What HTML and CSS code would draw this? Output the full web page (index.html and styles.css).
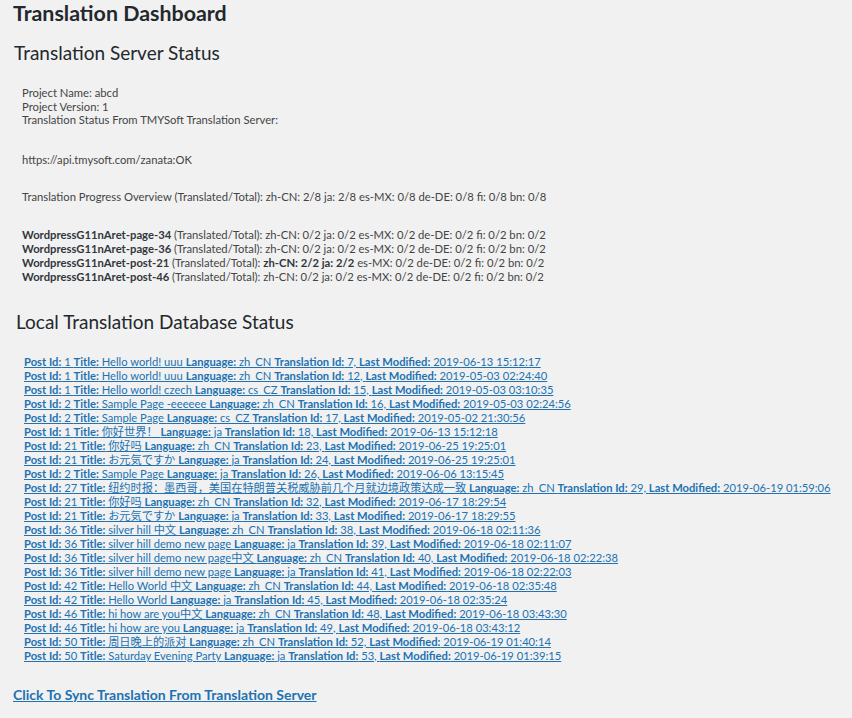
FILE: index.html
```html
<!DOCTYPE html>
<html lang="en">
<head>
<meta charset="utf-8">
<title>Translation Dashboard</title>
<link rel="stylesheet" href="styles.css">
</head>
<body>
<div class="wrap">
  <h1 class="page-title">Translation Dashboard</h1>
  <h2 class="section-title">Translation Server Status</h2>

  <div class="info block-project">
    <div>Project Name: abcd</div>
    <div>Project Version: 1</div>
    <div>Translation Status From TMYSoft Translation Server:</div>
  </div>

  <div class="info gap-server">https://api.tmysoft.com/zanata:OK</div>

  <div class="info gap-progress">Translation Progress Overview (Translated/Total): zh-CN: 2/8 ja: 2/8 es-MX: 0/8 de-DE: 0/8 fi: 0/8 bn: 0/8</div>

  <div class="info gap-docs">
    <div><b>WordpressG11nAret-page-34</b> (Translated/Total): zh-CN: 0/2 ja: 0/2 es-MX: 0/2 de-DE: 0/2 fi: 0/2 bn: 0/2</div>
    <div><b>WordpressG11nAret-page-36</b> (Translated/Total): zh-CN: 0/2 ja: 0/2 es-MX: 0/2 de-DE: 0/2 fi: 0/2 bn: 0/2</div>
    <div><b>WordpressG11nAret-post-21</b> (Translated/Total): <b>zh-CN: 2/2 ja: 2/2</b> es-MX: 0/2 de-DE: 0/2 fi: 0/2 bn: 0/2</div>
    <div><b>WordpressG11nAret-post-46</b> (Translated/Total): zh-CN: 0/2 ja: 0/2 es-MX: 0/2 de-DE: 0/2 fi: 0/2 bn: 0/2</div>
  </div>

  <h2 class="section-title local">Local Translation Database Status</h2>

  <ul class="posts">
    <li><a href="#"><b>Post Id:</b> 1 <b>Title:</b> Hello world! uuu <b>Language:</b> zh_CN <b>Translation Id:</b> 7, <b>Last Modified:</b> 2019-06-13 15:12:17</a></li>
    <li><a href="#"><b>Post Id:</b> 1 <b>Title:</b> Hello world! uuu <b>Language:</b> zh_CN <b>Translation Id:</b> 12, <b>Last Modified:</b> 2019-05-03 02:24:40</a></li>
    <li><a href="#"><b>Post Id:</b> 1 <b>Title:</b> Hello world! czech <b>Language:</b> cs_CZ <b>Translation Id:</b> 15, <b>Last Modified:</b> 2019-05-03 03:10:35</a></li>
    <li><a href="#"><b>Post Id:</b> 2 <b>Title:</b> Sample Page -eeeeee <b>Language:</b> zh_CN <b>Translation Id:</b> 16, <b>Last Modified:</b> 2019-05-03 02:24:56</a></li>
    <li><a href="#"><b>Post Id:</b> 2 <b>Title:</b> Sample Page <b>Language:</b> cs_CZ <b>Translation Id:</b> 17, <b>Last Modified:</b> 2019-05-02 21:30:56</a></li>
    <li><a href="#"><b>Post Id:</b> 1 <b>Title:</b> 你好世界！ <b>Language:</b> ja <b>Translation Id:</b> 18, <b>Last Modified:</b> 2019-06-13 15:12:18</a></li>
    <li><a href="#"><b>Post Id:</b> 21 <b>Title:</b> 你好吗 <b>Language:</b> zh_CN <b>Translation Id:</b> 23, <b>Last Modified:</b> 2019-06-25 19:25:01</a></li>
    <li><a href="#"><b>Post Id:</b> 21 <b>Title:</b> お元気ですか <b>Language:</b> ja <b>Translation Id:</b> 24, <b>Last Modified:</b> 2019-06-25 19:25:01</a></li>
    <li><a href="#"><b>Post Id:</b> 2 <b>Title:</b> Sample Page <b>Language:</b> ja <b>Translation Id:</b> 26, <b>Last Modified:</b> 2019-06-06 13:15:45</a></li>
    <li><a href="#"><b>Post Id:</b> 27 <b>Title:</b> 纽约时报：墨西哥，美国在特朗普关税威胁前几个月就边境政策达成一致 <b>Language:</b> zh_CN <b>Translation Id:</b> 29, <b>Last Modified:</b> 2019-06-19 01:59:06</a></li>
    <li><a href="#"><b>Post Id:</b> 21 <b>Title:</b> 你好吗 <b>Language:</b> zh_CN <b>Translation Id:</b> 32, <b>Last Modified:</b> 2019-06-17 18:29:54</a></li>
    <li><a href="#"><b>Post Id:</b> 21 <b>Title:</b> お元気ですか <b>Language:</b> ja <b>Translation Id:</b> 33, <b>Last Modified:</b> 2019-06-17 18:29:55</a></li>
    <li><a href="#"><b>Post Id:</b> 36 <b>Title:</b> silver hill 中文 <b>Language:</b> zh_CN <b>Translation Id:</b> 38, <b>Last Modified:</b> 2019-06-18 02:11:36</a></li>
    <li><a href="#"><b>Post Id:</b> 36 <b>Title:</b> silver hill demo new page <b>Language:</b> ja <b>Translation Id:</b> 39, <b>Last Modified:</b> 2019-06-18 02:11:07</a></li>
    <li><a href="#"><b>Post Id:</b> 36 <b>Title:</b> silver hill demo new page中文 <b>Language:</b> zh_CN <b>Translation Id:</b> 40, <b>Last Modified:</b> 2019-06-18 02:22:38</a></li>
    <li><a href="#"><b>Post Id:</b> 36 <b>Title:</b> silver hill demo new page <b>Language:</b> ja <b>Translation Id:</b> 41, <b>Last Modified:</b> 2019-06-18 02:22:03</a></li>
    <li><a href="#"><b>Post Id:</b> 42 <b>Title:</b> Hello World 中文 <b>Language:</b> zh_CN <b>Translation Id:</b> 44, <b>Last Modified:</b> 2019-06-18 02:35:48</a></li>
    <li><a href="#"><b>Post Id:</b> 42 <b>Title:</b> Hello World <b>Language:</b> ja <b>Translation Id:</b> 45, <b>Last Modified:</b> 2019-06-18 02:35:24</a></li>
    <li><a href="#"><b>Post Id:</b> 46 <b>Title:</b> hi how are you中文 <b>Language:</b> zh_CN <b>Translation Id:</b> 48, <b>Last Modified:</b> 2019-06-18 03:43:30</a></li>
    <li><a href="#"><b>Post Id:</b> 46 <b>Title:</b> hi how are you <b>Language:</b> ja <b>Translation Id:</b> 49, <b>Last Modified:</b> 2019-06-18 03:43:12</a></li>
    <li><a href="#"><b>Post Id:</b> 50 <b>Title:</b> 周日晚上的派对 <b>Language:</b> zh_CN <b>Translation Id:</b> 52, <b>Last Modified:</b> 2019-06-19 01:40:14</a></li>
    <li><a href="#"><b>Post Id:</b> 50 <b>Title:</b> Saturday Evening Party <b>Language:</b> ja <b>Translation Id:</b> 53, <b>Last Modified:</b> 2019-06-19 01:39:15</a></li>
  </ul>

  <a class="sync" href="#">Click To Sync Translation From Translation Server</a>
</div>
</body>
</html>
```

FILE: styles.css
```css
html, body {
  margin: 0;
  padding: 0;
  background: #f1f1f1;
}

body {
  font-family: Lato, "Noto Sans CJK SC", sans-serif;
  font-size: 11.25px;
  color: #444;
}

.wrap {
  padding: 1px 0 0 13px;
}

.page-title {
  margin: 0;
  font-size: 21.4px;
  line-height: 24px;
  font-weight: 700;
  color: #23282d;
}

.section-title {
  margin: 16px 0 0 1px;
  font-size: 19px;
  line-height: 24px;
  font-weight: 400;
  color: #23282d;
}

.section-title.local {
  margin-top: 26px;
  margin-left: 3px;
}

.info {
  margin-left: 9px;
  line-height: 14px;
}

.block-project {
  margin-top: 21px;
  line-height: 13.5px;
}

.gap-server {
  margin-top: 26px;
}

.gap-progress {
  margin-top: 23px;
}

.gap-docs {
  margin-top: 24px;
}

.info b {
  font-weight: 700;
  color: #32373c;
}

.posts {
  list-style: none;
  margin: 21px 0 0 11px;
  padding: 0;
  font-size: 11.2px;
  line-height: 14px;
}

.posts a {
  color: #2271b1;
  text-decoration: underline;
}

.posts b {
  font-weight: 700;
}

.sync {
  display: inline-block;
  margin-top: 23px;
  font-size: 14px;
  line-height: 18px;
  font-weight: 700;
  color: #2271b1;
  text-decoration: underline;
}
```
